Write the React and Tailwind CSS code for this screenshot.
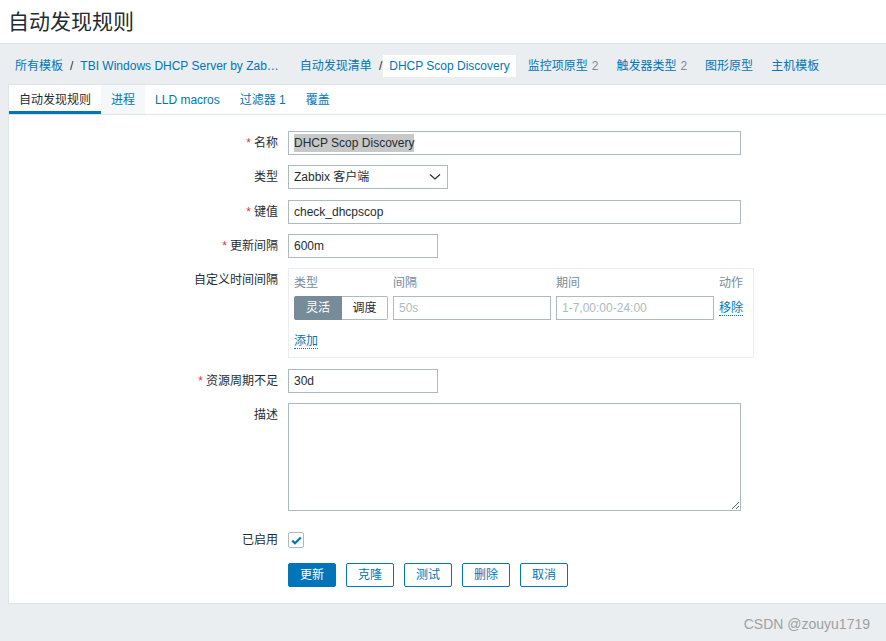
import React from 'react';

const FONT = { fontFamily: '"Liberation Sans", Arial, "Noto Sans CJK SC", sans-serif' };

const Req = () => <span className="text-[#e33734] mr-[3px]">*</span>;

const Label = ({ children, required }) => (
  <div className="w-[279px] shrink-0 pr-[10px] text-right leading-[24px] text-[#1f2c33]">
    {required && <Req />}
    {children}
  </div>
);

const Field = ({ w, children, className = '' }) => (
  <div
    className={`h-[24px] border border-[#acbbc2] bg-white px-[5px] flex items-center text-[#1f2c33] ${className}`}
    style={{ width: w }}
  >
    {children}
  </div>
);

const Button = ({ children, primary }) => (
  <button
    className={`h-[24px] px-[11px] rounded-[2px] border border-[#0275b8] leading-none ${
      primary ? 'bg-[#0275b8] text-white' : 'bg-white text-[#0275b8]'
    }`}
  >
    {children}
  </button>
);

export default function App() {
  const crumbs = [
    { label: '所有模板', sep: true },
    { label: 'TBI Windows DHCP Server by Zab…', gapAfter: true },
    { label: '自动发现清单', sep: true },
    { label: 'DHCP Scop Discovery', active: true },
    { label: '监控项原型', count: 2 },
    { label: '触发器类型', count: 2 },
    { label: '图形原型' },
    { label: '主机模板' },
  ];

  const tabs = ['自动发现规则', '进程', 'LLD macros', '过滤器 1', '覆盖'];

  return (
    <div className="min-h-screen bg-[#ebeef0] text-[12px]" style={FONT}>
      {/* Header */}
      <header className="h-[44px] bg-white border-b border-[#dfe4e7] px-[8px] flex items-center">
        <h1 className="text-[21px] text-[#1f2c33] leading-none">自动发现规则</h1>
      </header>

      {/* Breadcrumbs */}
      <nav className="h-[40px] flex items-center pl-[9px] pt-[4px]">
        {crumbs.map((c, i) => (
          <div key={i} className={`flex items-center ${c.gapAfter ? 'mr-[9px]' : ''}`}>
            <span
              className={`px-[6px] h-[22px] flex items-center whitespace-nowrap ${
                c.active ? 'bg-white text-[#0275b8]' : 'text-[#0275b8]'
              }`}
            >
              {c.label}
              {c.count && <span className="ml-[4px] text-[#768d99]">{c.count}</span>}
            </span>
            {c.sep ? (
              <span className="text-[#1f2c33] mx-[1px]">/</span>
            ) : (
              !c.gapAfter && <span className="w-[6px]" />
            )}
          </div>
        ))}
      </nav>

      {/* Panel */}
      <div className="ml-[8px] bg-white border border-r-0 border-[#dfe4e7]">
        {/* Tabs */}
        <div className="h-[30px] flex border-b border-[#dfe4e7]">
          {tabs.map((t, i) => (
            <div
              key={t}
              className={`px-[10px] flex items-center ${
                i === 0
                  ? 'text-[#1f2c33] border-b-[3px] border-[#0275b8] pt-[3px]'
                  : i === 1
                  ? 'text-[#0275b8] bg-[#f4f8fb]'
                  : 'text-[#0275b8]'
              }`}
            >
              {t}
            </div>
          ))}
        </div>

        {/* Form */}
        <div className="pt-[16px] pb-[16px]">
          <div className="flex">
            <Label required>名称</Label>
            <Field w={453}>
              <span className="bg-[#c8c8c8] text-[#1f2c33]">DHCP Scop Discovery</span>
            </Field>
          </div>

          <div className="flex mt-[10px]">
            <Label>类型</Label>
            <Field w={160} className="justify-between">
              <span>Zabbix 客户端</span>
              <svg width="12" height="8" viewBox="0 0 12 8" className="mr-[1px]">
                <path d="M1 1.5 L6 6 L11 1.5" fill="none" stroke="#1f2c33" strokeWidth="1.2" />
              </svg>
            </Field>
          </div>

          <div className="flex mt-[11px]">
            <Label required>键值</Label>
            <Field w={453}>check_dhcpscop</Field>
          </div>

          <div className="flex mt-[10px]">
            <Label required>更新间隔</Label>
            <Field w={150}>600m</Field>
          </div>

          <div className="flex mt-[10px]">
            <Label>自定义时间间隔</Label>
            <div className="w-[466px] h-[90px] border border-[#ebeef0] px-[5px] pt-[5px]">
              <div className="grid grid-cols-[94px_158px_158px_auto] gap-x-[5px] text-[#768d99] leading-[18px]">
                <span>类型</span>
                <span>间隔</span>
                <span>期间</span>
                <span>动作</span>
              </div>
              <div className="grid grid-cols-[94px_158px_158px_auto] gap-x-[5px] mt-[4px] items-center">
                <div className="flex h-[24px]">
                  <span className="w-[48px] flex items-center justify-center bg-[#768d99] text-white rounded-l-[2px]">
                    灵活
                  </span>
                  <span className="flex-1 flex items-center justify-center border border-l-0 border-[#acbbc2] text-[#1f2c33] rounded-r-[2px]">
                    调度
                  </span>
                </div>
                <Field w={158}>
                  <span className="text-[#acbbc2]">50s</span>
                </Field>
                <Field w={158}>
                  <span className="text-[#acbbc2]">1-7,00:00-24:00</span>
                </Field>
                <span className="text-[#0275b8] border-b border-dotted border-[#0275b8] w-fit leading-[14px]">
                  移除
                </span>
              </div>
              <div className="mt-[12px]">
                <span className="text-[#0275b8] border-b border-dotted border-[#0275b8] leading-[14px]">添加</span>
              </div>
            </div>
          </div>

          <div className="flex mt-[11px]">
            <Label required>资源周期不足</Label>
            <Field w={150}>30d</Field>
          </div>

          <div className="flex mt-[10px]">
            <Label>描述</Label>
            <textarea
              readOnly
              className="w-[453px] h-[108px] border border-[#acbbc2] block outline-none"
            />
          </div>

          <div className="flex mt-[17px] items-center">
            <Label>已启用</Label>
            <div className="w-[16px] h-[16px] border border-[#acbbc2] rounded-[2px] flex items-center justify-center">
              <svg width="11" height="9" viewBox="0 0 11 9">
                <path d="M1.2 4.6 L4 7.3 L9.8 1.4" fill="none" stroke="#0275b8" strokeWidth="2.2" />
              </svg>
            </div>
          </div>

          <div className="flex mt-[11px]">
            <div className="w-[279px] shrink-0" />
            <div className="flex gap-[10px]">
              <Button primary>更新</Button>
              <Button>克隆</Button>
              <Button>测试</Button>
              <Button>删除</Button>
              <Button>取消</Button>
            </div>
          </div>
        </div>
      </div>

      {/* Footer */}
      <div className="flex justify-end pr-[16px] pt-[10px] pb-[10px]">
        <span className="text-[14px] text-[#a0a0a0]">CSDN @zouyu1719</span>
      </div>
    </div>
  );
}
